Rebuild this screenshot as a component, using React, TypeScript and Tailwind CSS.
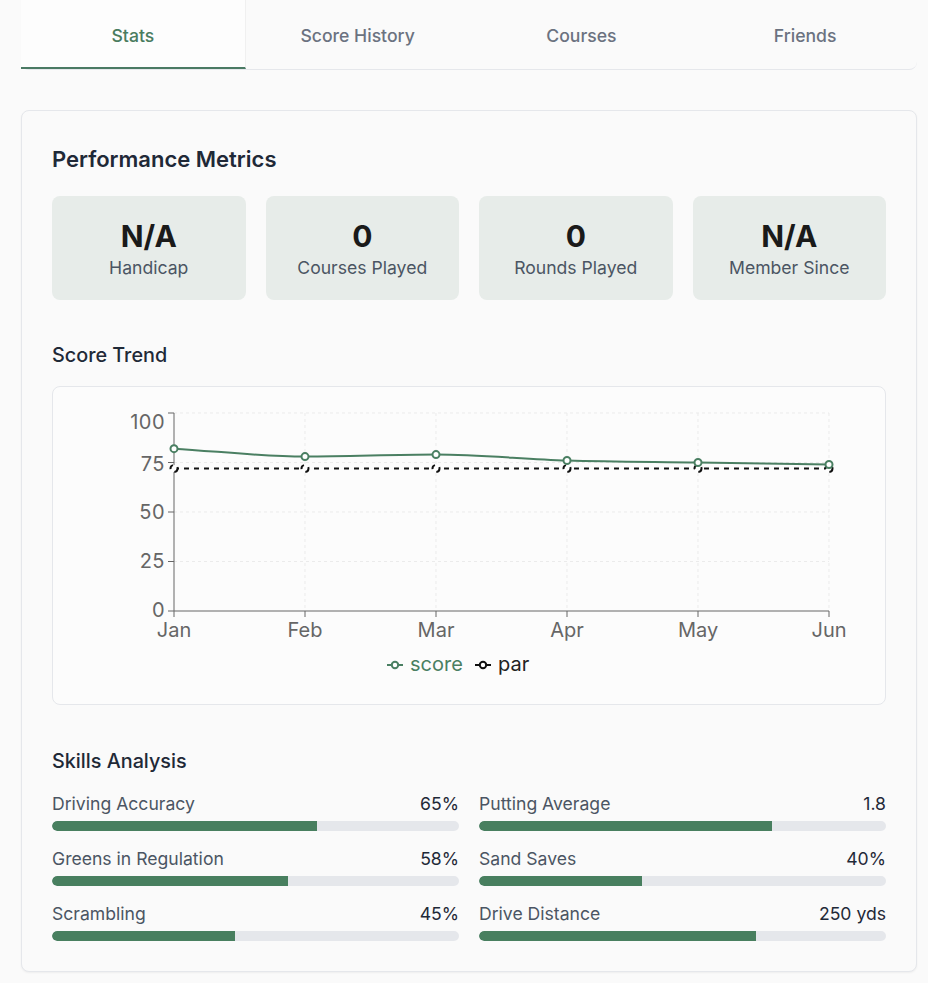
import React from "react";

const GREEN = "#4a7f62";

const months = ["Jan", "Feb", "Mar", "Apr", "May", "Jun"];
const scores = [82, 78, 79, 76, 75, 74];

const X0 = 121;
const STEP = 131;
const YB = 224;
const K = 1.98;
const xs = months.map((_, i) => X0 + i * STEP);
const yOf = (v: number) => YB - v * K;

function monotonePath(px: number[], py: number[]) {
  const n = px.length;
  const d: number[] = [];
  const m: number[] = [];
  for (let i = 0; i < n - 1; i++) d.push((py[i + 1] - py[i]) / (px[i + 1] - px[i]));
  for (let i = 0; i < n; i++) {
    if (i === 0) m.push(d[0]);
    else if (i === n - 1) m.push(d[n - 2]);
    else if (d[i - 1] * d[i] <= 0) m.push(0);
    else {
      const h0 = px[i] - px[i - 1];
      const h1 = px[i + 1] - px[i];
      const p = (d[i - 1] * h1 + d[i] * h0) / (h0 + h1);
      const s = Math.sign(d[i - 1]) * Math.min(Math.abs(d[i - 1]), Math.abs(d[i]), 0.5 * Math.abs(p));
      m.push(2 * s);
    }
  }
  let path = `M${px[0]},${py[0]}`;
  for (let i = 0; i < n - 1; i++) {
    const h = (px[i + 1] - px[i]) / 3;
    path += ` C${px[i] + h},${py[i] + m[i] * h} ${px[i + 1] - h},${py[i + 1] - m[i + 1] * h} ${px[i + 1]},${py[i + 1]}`;
  }
  return path;
}

function Chart() {
  const scorePath = monotonePath(xs, scores.map(yOf));
  const parY = yOf(72);
  const yTicks = [
    { v: 100, base: 42 },
    { v: 75, base: 84 },
    { v: 50, base: 132 },
    { v: 25, base: 181 },
    { v: 0, base: 230 },
  ];
  return (
    <svg width="832" height="317" viewBox="0 0 832 317" style={{ fontFamily: "Inter, 'Noto Sans', sans-serif" }}>
      {[100, 75, 50, 25].map((v) => (
        <line key={v} x1={X0} x2={xs[5]} y1={yOf(v)} y2={yOf(v)} stroke="#ebebeb" strokeDasharray="3 3" />
      ))}
      {xs.slice(1).map((x) => (
        <line key={x} x1={x} x2={x} y1={yOf(100)} y2={YB} stroke="#ebebeb" strokeDasharray="3 3" />
      ))}
      <line x1={X0} x2={X0} y1={yOf(100)} y2={YB} stroke="#666" />
      {yTicks.map((t) => (
        <g key={t.v}>
          <line x1={X0 - 6} x2={X0} y1={yOf(t.v)} y2={yOf(t.v)} stroke="#666" />
          <text x={X0 - 9} y={t.base} textAnchor="end" fontSize="20" fill="#666" letterSpacing="0.5">
            {t.v}
          </text>
        </g>
      ))}
      <line x1={X0} x2={xs[5]} y1={YB} y2={YB} stroke="#666" />
      {xs.map((x, i) => (
        <g key={x}>
          <line x1={x} x2={x} y1={YB} y2={YB + 6} stroke="#666" />
          <text x={x} y={250} textAnchor="middle" fontSize="20" fill="#666">
            {months[i]}
          </text>
        </g>
      ))}
      <path d={scorePath} fill="none" stroke={GREEN} strokeWidth="2" />
      <line x1={xs[0]} x2={xs[5]} y1={parY} y2={parY} stroke="#111" strokeWidth="2" strokeDasharray="5 5" />
      {xs.map((x) => (
        <circle key={"p" + x} cx={x} cy={parY} r="3.5" fill="#fff" stroke="#111" strokeWidth="2" strokeDasharray="5 5" />
      ))}
      {xs.map((x, i) => (
        <circle key={"s" + x} cx={x} cy={yOf(scores[i])} r="3.5" fill="#fff" stroke={GREEN} strokeWidth="2" />
      ))}
      <g>
        <line x1={334} x2={350} y1={278} y2={278} stroke={GREEN} strokeWidth="2" />
        <circle cx={342} cy={278} r="3.2" fill="#fff" stroke={GREEN} strokeWidth="2" />
        <text x={357} y={284} fontSize="20" fill={GREEN}>
          score
        </text>
        <line x1={422} x2={438} y1={278} y2={278} stroke="#111" strokeWidth="2" />
        <circle cx={430} cy={278} r="3.2" fill="#fff" stroke="#111" strokeWidth="2" />
        <text x={445} y={284} fontSize="20" fill="#222">
          par
        </text>
      </g>
    </svg>
  );
}

const stats = [
  { v: "N/A", l: "Handicap" },
  { v: "0", l: "Courses Played" },
  { v: "0", l: "Rounds Played" },
  { v: "N/A", l: "Member Since" },
];

const skillsLeft = [
  { l: "Driving Accuracy", v: "65%", p: 65 },
  { l: "Greens in Regulation", v: "58%", p: 58 },
  { l: "Scrambling", v: "45%", p: 45 },
];
const skillsRight = [
  { l: "Putting Average", v: "1.8", p: 72 },
  { l: "Sand Saves", v: "40%", p: 40 },
  { l: "Drive Distance", v: "250 yds", p: 68 },
];

function Skill({ l, v, p }: { l: string; v: string; p: number }) {
  return (
    <div className="flex flex-col">
      <div className="flex justify-between pt-px text-[17.6px] leading-6">
        <span className="text-[#4b5563]">{l}</span>
        <span className="text-[#1f2937]">{v}</span>
      </div>
      <div className="mt-[5px] h-2.5 w-full overflow-hidden rounded-full bg-[#e5e7eb]">
        <div className="h-full rounded-l-full bg-[#487f5f]" style={{ width: `${p}%` }} />
      </div>
    </div>
  );
}

export default function App() {
  const tabs = ["Stats", "Score History", "Courses", "Friends"];
  return (
    <div
      className="min-h-[983px] w-[928px] bg-[#fafafa] px-[21px]"
      style={{ fontFamily: "Inter, 'Noto Sans', sans-serif" }}
    >
      <div className="flex h-[70px] w-[896px] rounded-lg border-b border-[#e5e7eb] bg-[#fafafa]">
        {tabs.map((t, i) => (
          <div
            key={t}
            className={
              i === 0
                ? "flex flex-1 items-center justify-center border-r border-b-2 border-r-[#f0f0f0] border-b-[#4a7a64] bg-[#fdfdfd] pt-[6px] text-[17.6px] font-medium text-[#4a7c5f]"
                : "flex flex-1 items-center justify-center pt-[4px] text-[17.6px] font-medium text-[#6b7280]"
            }
          >
            {t}
          </div>
        ))}
      </div>

      <div className="mt-[40px] w-[896px] rounded-lg border border-[#e5e7eb] bg-[#fafafa] px-[30px] pt-[34px] pb-[30px] shadow-[0_1px_2px_rgba(0,0,0,0.05)]">
        <h2 className="text-[22px] leading-7 font-semibold text-[#1f2937]">Performance Metrics</h2>
        <div className="mt-[23px] grid grid-cols-4 gap-5">
          {stats.map((s) => (
            <div key={s.l} className="flex h-[104px] flex-col items-center justify-center rounded-lg bg-[#e7ece9]">
              <div className="mt-0.5 text-[30px] leading-9 font-bold text-[#1a1a1a]">{s.v}</div>
              <div className="mt-0.5 text-[17.6px] leading-6 text-[#4b5563]">{s.l}</div>
            </div>
          ))}
        </div>

        <h3 className="mt-[41px] text-[19.8px] leading-7 font-medium text-[#1f2937]">Score Trend</h3>
        <div className="mt-[17px] h-[319px] rounded-lg border border-[#e5e7eb] bg-[#fcfcfc]">
          <Chart />
        </div>

        <h3 className="mt-[42px] text-[19.8px] leading-7 font-medium text-[#1f2937]">Skills Analysis</h3>
        <div className="mt-4 grid grid-cols-2 gap-x-5">
          <div className="flex flex-col gap-[15px]">
            {skillsLeft.map((s) => (
              <Skill key={s.l} {...s} />
            ))}
          </div>
          <div className="flex flex-col gap-[15px]">
            {skillsRight.map((s) => (
              <Skill key={s.l} {...s} />
            ))}
          </div>
        </div>
      </div>
    </div>
  );
}
